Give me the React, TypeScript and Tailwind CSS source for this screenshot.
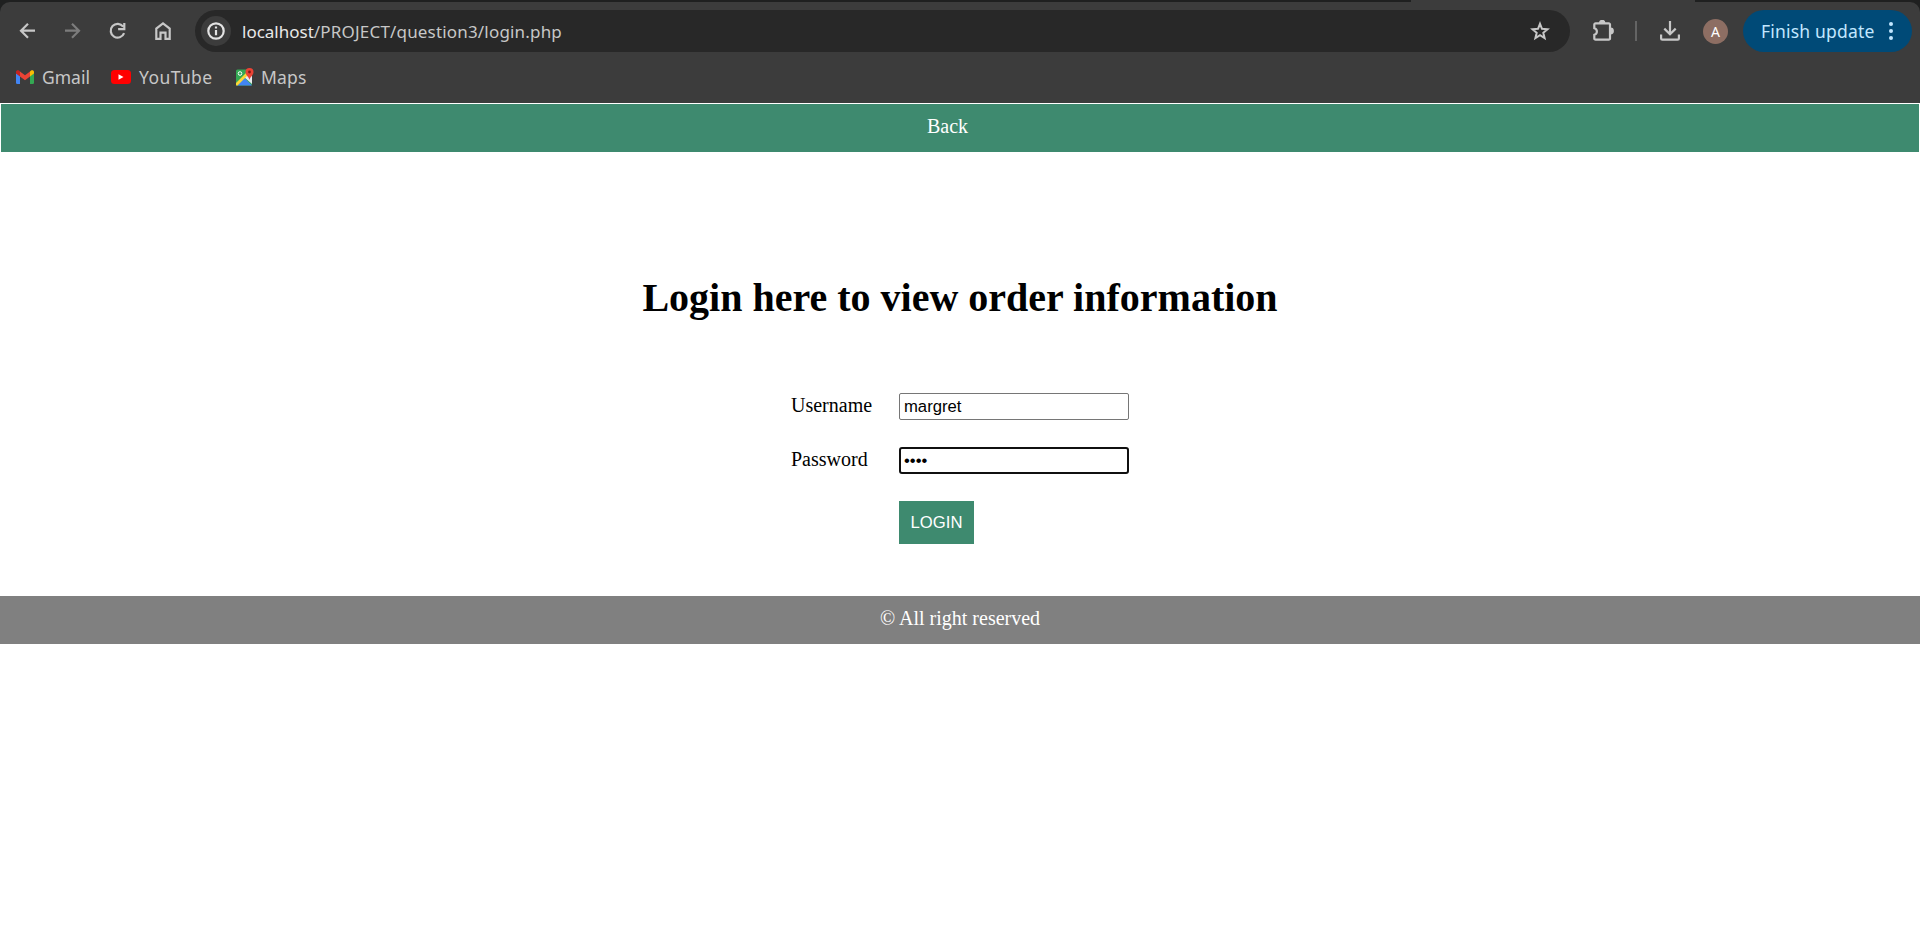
import type { ReactNode } from "react";

function Icon({ children, size = 20, className = "" }: { children: ReactNode; size?: number; className?: string }) {
  return (
    <svg width={size} height={size} viewBox={`0 0 ${size} ${size}`} fill="none" stroke="currentColor" strokeWidth="2.2" className={`shrink-0 ${className}`}>
      {children}
    </svg>
  );
}

function Toolbar() {
  return (
    <div className="flex h-[46px] items-start pt-2 pl-[18px] pr-[8px] text-[#c7c7c7]">
      <div className="flex h-[42px] items-center">
        <Icon><path d="M17 9.700H3.500M10 2.700l-7 7 7 7" /></Icon>
        <Icon className="ml-[24px] text-[#7c7c7c]"><path d="M3 9.700h13.500M10 2.700l7 7-7 7" /></Icon>
        <Icon className="ml-[26px]"><path d="M15.200 5.700A6.900 6.900 0 1 0 16.100 12.200M16.300 2v6.200h-6.200" /></Icon>
        <Icon className="ml-[25px]"><path d="M3.300 17.800V7.600L10 2.400l6.700 5.200v10.200h-4.200v-6.200h-5v6.200z" /></Icon>
      </div>
      <div className="ml-[22px] flex h-[42px] w-[1375px] items-center rounded-full bg-[#282828] pl-[6px] pr-[20px]">
        <div className="flex size-[30px] items-center justify-center rounded-full bg-[#3c3c3c] text-[#e3e3e3]">
          <Icon size={18}><circle cx="9" cy="9" r="7.700" /><path d="M9 8v5.200M9 4.600v2" /></Icon>
        </div>
        <span className="mt-[2px] ml-[11px] w-[325px] whitespace-nowrap text-[17px] leading-[24px] tracking-[0.180px] text-[#c7c7c7]">
          <span className="tracking-[0px] text-[#e8e8e8]">localhost</span>/PROJECT/question3/login.php
        </span>
        <Icon className="ml-auto"><path strokeWidth="2" d="M10 2.800l2 5 5.500.4-4.200 3.600 1.300 5.300L10 14.200l-4.600 2.900 1.300-5.300L2.500 8.200l5.500-.4z" /></Icon>
      </div>
      <div className="flex h-[42px] items-center">
        <Icon size={22} className="ml-[22px]">
          <path d="M3.500 3.400H16.800a1.200 1.200 0 0 1 1.200 1.200V18.400a1.200 1.200 0 0 1-1.200 1.200H3.500a1.200 1.200 0 0 1-1.200-1.200V14.800A3.400 3.400 0 0 0 2.300 8.200V4.600A1.200 1.200 0 0 1 3.500 3.400z" />
          <path d="M7 3a3.200 3.200 0 0 1 6.400 0zM18.500 7.600a3.400 3.400 0 0 1 0 6.800z" fill="currentColor" stroke="none" />
        </Icon>
        <div className="ml-[21px] h-[20px] w-[2px] bg-[#646464]" />
        <Icon size={22} className="ml-[22px]"><path d="M11 1v13M5.300 8.600l5.700 5.700 5.700-5.700M2.100 14.500v4a1.200 1.200 0 0 0 1.200 1.200h15.400a1.200 1.200 0 0 0 1.200-1.200v-4" /></Icon>
        <div className="ml-[22px] flex size-[25px] items-center justify-center rounded-full bg-[#8d6e63] text-[14px] text-white">A</div>
        <div className="ml-[15px] flex h-[42px] w-[169px] items-center rounded-full bg-[#004a77] pl-[18px] text-[#c2e7ff]">
          <span className="w-[115px] whitespace-nowrap text-[17.500px] tracking-[0.200px]">Finish update</span>
          <svg width="4" height="18" viewBox="0 0 4 18" fill="currentColor" className="ml-[13px]">
            <circle cx="2" cy="2" r="2" /><circle cx="2" cy="9" r="2" /><circle cx="2" cy="16" r="2" />
          </svg>
        </div>
      </div>
    </div>
  );
}

function Bookmarks() {
  return (
    <div className="flex h-[55px] items-center pt-[3px] pl-[16px] text-[17.500px] text-[#c7c7c7]">
      <svg width="18" height="14" viewBox="0 0 18 14">
        <path d="M0 3v9.700A1.300 1.300 0 0 0 1.300 14H4V6z" fill="#4285f4" />
        <path d="M14 6v8h2.700a1.300 1.300 0 0 0 1.300-1.300V3z" fill="#34a853" />
        <path d="M4 1.500l5 3.800 5-3.800V6.500l-5 3.800-5-3.800z" fill="#ea4335" />
        <path d="M0 2v1.500l4 3V1.500L3.200.8C1.900-.2 0 .4 0 2z" fill="#c5221f" />
        <path d="M18 2v1.500l-4 3V1.500l.8-.7C16.100-.2 18 .4 18 2z" fill="#fbbc04" />
      </svg>
      <span className="ml-[8px] w-[49px]">Gmail</span>
      <svg width="20" height="14" viewBox="0 0 20 14" className="ml-[20px]">
        <rect width="20" height="14" rx="3.500" fill="#f00" /><path d="M7.500 4.200v5.600l5-2.800z" fill="#fff" />
      </svg>
      <span className="ml-[8px] w-[74px] tracking-[0.400px]">YouTube</span>
      <svg width="18" height="18" viewBox="0 0 18 18" className="ml-[23px]">
        <rect y="1.500" width="16" height="16" rx="1.500" fill="#34a853" />
        <path d="M16 5v11L8 9z" fill="#e8eaed" />
        <path d="M1 17.500L8.500 10 16 17.500z" fill="#4285f4" />
        <path d="M0 15L10 5l1.500 2.500L1.500 17.500H0z" fill="#fdd835" />
        <circle cx="4" cy="5.500" r="1.800" fill="none" stroke="#fff" />
        <path d="M13.500 12c-.3-3-4-4.500-4-8a4 4 0 0 1 8 0c0 3.500-3.700 5-4 8z" fill="#ea4335" />
        <circle cx="13.500" cy="4" r="1.400" fill="#811b14" />
      </svg>
      <span className="ml-[7px] w-[46px] tracking-[0.150px]">Maps</span>
    </div>
  );
}

export default function App() {
  return (
    <div className="h-[928px] overflow-hidden bg-white font-['Liberation_Serif',serif] text-[20px] text-black">
      <header className="h-[103px] bg-[#1f2020] font-['Noto_Sans',sans-serif]">
        <div className="flex h-[2px] justify-end pr-[225px]">
          <div className="w-[284px] bg-[#3c3c3c]" />
        </div>
        <div className="h-[101px] rounded-t-[10px] bg-[#3c3c3c]">
          <Toolbar />
          <Bookmarks />
        </div>
      </header>
      <nav className="mx-px mt-px flex h-[48px] justify-center bg-[#3e8a6f] pt-[11px] pr-[25px] leading-[23px] text-white">
        <a href="#back">Back</a>
      </nav>
      <main className="flex h-[444px] flex-col items-center">
        <h1 className="mt-[123px] text-[40px] leading-[46px] font-bold">Login here to view order information</h1>
        <form className="mt-[72px] grid grid-cols-[108px_230px] gap-y-[27px]">
          <label htmlFor="username" className="leading-[25px]">Username</label>
          <input id="username" defaultValue="margret" className="h-[27px] w-[230px] rounded-[2px] border border-[#767676] px-1 font-['Liberation_Sans',sans-serif] text-[16.667px]" />
          <label htmlFor="password" className="leading-[25px]">Password</label>
          <input id="password" type="password" defaultValue="1234" className="h-[27px] w-[230px] rounded-[3px] border-2 border-[#101010] px-[3px] font-['Liberation_Sans',sans-serif] text-[16.667px] outline-none" />
          <button type="button" className="col-start-2 h-[43px] w-[75px] bg-[#3e8a6f] font-['Liberation_Sans',sans-serif] text-[16.667px] text-white">LOGIN</button>
        </form>
      </main>
      <footer className="h-[48px] bg-[#808080] pt-[11px] text-center leading-[23px] text-white">© All right reserved</footer>
    </div>
  );
}
